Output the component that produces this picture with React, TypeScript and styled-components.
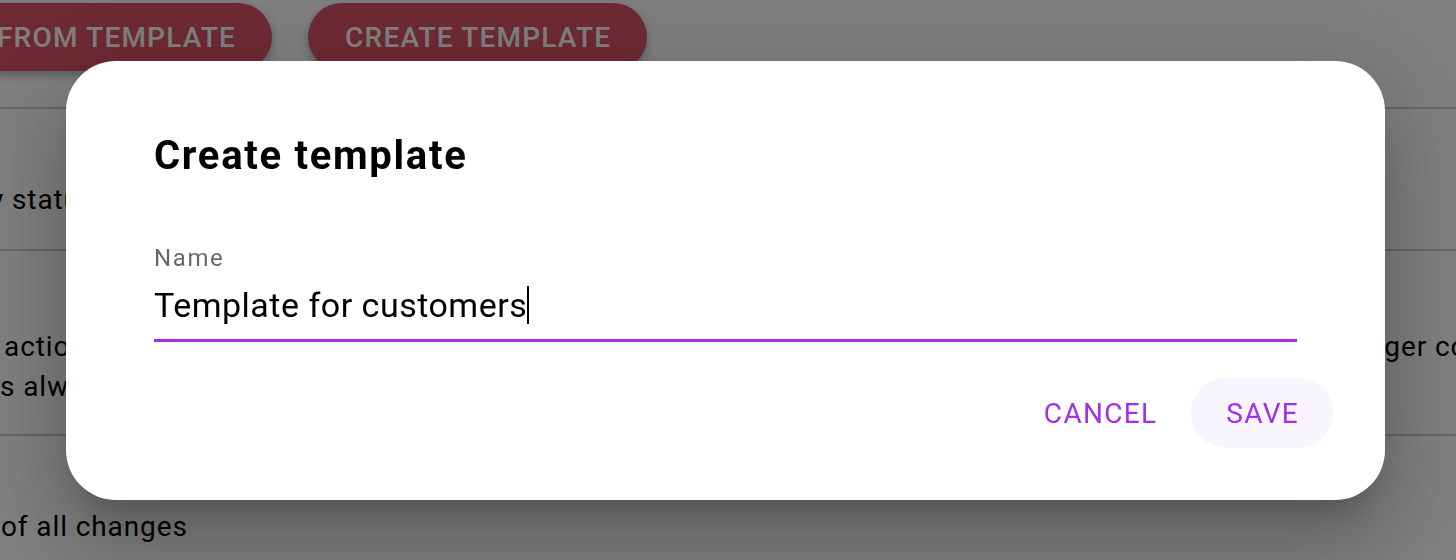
import styled, { createGlobalStyle } from "styled-components";

const GlobalStyle = createGlobalStyle`
    html, body {
        margin: 0;
        padding: 0;
        overflow: hidden;
        font-family: Roboto, "Liberation Sans", sans-serif;
    }
`

const Page = styled.div`
    width: 1456px;
    height: 560px;
    background-color: #ffffff;
    overflow: hidden;
    color: #000000;
`

const Toolbar = styled.div`
    display: flex;
    gap: 36px;
    margin-left: -40px;
    padding: 3px 0 36px;
    border-bottom: 2px solid #cccccc;
`

const RedButton = styled.button`
    height: 68px;
    padding: 0 36px 0 37px;
    border: 0;
    border-radius: 34px;
    background-color: #dc5468;
    color: #ffffff;
    font-family: Roboto, "Liberation Sans", sans-serif;
    font-size: 28px;
    font-weight: 500;
    letter-spacing: 1.2px;
    box-shadow: 0 4px 10px rgba(0, 0, 0, 0.3);
`

const Row = styled.div<{ $top: number; $bottom: number }>`
    display: grid;
    grid-template-columns: 1333px 1fr;
    padding-top: ${(p) => p.$top}px;
    padding-bottom: ${(p) => p.$bottom}px;
    border-bottom: 2px solid #cccccc;
    font-size: 28px;
    line-height: 40px;
    letter-spacing: 0.9px;
    white-space: nowrap;
`

const Line = styled.div<{ $shift?: number }>`
    margin-left: ${(p) => p.$shift ?? 0}px;
`

const Overlay = styled.div`
    position: fixed;
    inset: 0;
    background-color: rgba(0, 0, 0, 0.5);
    display: flex;
    align-items: flex-start;
    padding: 61px 0 0 66px;
`

const Dialog = styled.div`
    width: 1319px;
    box-sizing: border-box;
    background-color: #ffffff;
    border-radius: 50px;
    padding: 71px 52px 52px 88px;
    box-shadow: 0 22px 30px -14px rgba(0, 0, 0, 0.2), 0 48px 76px 6px rgba(0, 0, 0, 0.14),
        0 18px 92px 16px rgba(0, 0, 0, 0.12);
    display: flex;
    flex-direction: column;
`

const Title = styled.h2`
    margin: 0;
    font-size: 40px;
    line-height: 48px;
    font-weight: 700;
    letter-spacing: 1.7px;
    color: #000000;
`

const Field = styled.div`
    margin: 64px 36px 0 0;
    display: flex;
    flex-direction: column;
`

const Label = styled.label`
    font-size: 24px;
    line-height: 28px;
    letter-spacing: 1.6px;
    color: rgba(0, 0, 0, 0.6);
`

const Input = styled.div`
    margin-top: 13px;
    padding-bottom: 14px;
    border-bottom: 3px solid #a32fe6;
    font-size: 34px;
    line-height: 40px;
    letter-spacing: 0.5px;
    color: #000000;
    display: flex;
    align-items: center;
`

const Caret = styled.span`
    display: inline-block;
    width: 2px;
    height: 38px;
    background-color: #000000;
`

const Actions = styled.div`
    margin-top: 36px;
    display: flex;
    justify-content: flex-end;
`

const TextButton = styled.button<{ $active?: boolean }>`
    height: 70px;
    padding: 0 34px 0 35px;
    border: 0;
    border-radius: 35px;
    background-color: ${(p) => (p.$active ? "#f9f5fe" : "transparent")};
    color: #a32fe6;
    font-family: Roboto, "Liberation Sans", sans-serif;
    font-size: 28px;
    font-weight: 400;
    letter-spacing: 1.3px;
    cursor: pointer;
`

const App: React.FC = () => {
    return (
        <>
            <GlobalStyle />
            <Page>
                <Toolbar>
                    <RedButton>FROM TEMPLATE</RedButton>
                    <RedButton>CREATE TEMPLATE</RedButton>
                </Toolbar>
                <Row $top={71} $bottom={29}>
                    <Line $shift={-10}>y status</Line>
                </Row>
                <Row $top={76} $bottom={27}>
                    <div>
                        <Line $shift={4}>actions</Line>
                        <Line $shift={0}>s always</Line>
                    </div>
                    <Line>Trigger conditions</Line>
                </Row>
                <Row $top={71} $bottom={29}>
                    <Line $shift={1}>of all changes</Line>
                </Row>
            </Page>
            <Overlay>
                <Dialog>
                    <Title>Create template</Title>
                    <Field>
                        <Label>Name</Label>
                        <Input>
                            Template for customers
                            <Caret />
                        </Input>
                    </Field>
                    <Actions>
                        <TextButton>CANCEL</TextButton>
                        <TextButton $active>SAVE</TextButton>
                    </Actions>
                </Dialog>
            </Overlay>
        </>
    );
};

export default App;
